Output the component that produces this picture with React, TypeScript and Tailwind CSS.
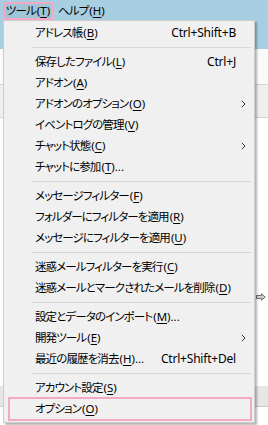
import React from 'react';

type Item =
  | { sep: true }
  | { label: string; key: string; tail?: string; shortcut?: string; sub?: boolean; hot?: boolean };

const items: Item[] = [
  { label: 'アドレス帳', key: 'B', shortcut: 'Ctrl+Shift+B' },
  { sep: true },
  { label: '保存したファイル', key: 'L', shortcut: 'Ctrl+J' },
  { label: 'アドオン', key: 'A' },
  { label: 'アドオンのオプション', key: 'O', sub: true },
  { label: 'イベントログの管理', key: 'V' },
  { label: 'チャット状態', key: 'C', sub: true },
  { label: 'チャットに参加', key: 'T', tail: '...' },
  { sep: true },
  { label: 'メッセージフィルター', key: 'F' },
  { label: 'フォルダーにフィルターを適用', key: 'R' },
  { label: 'メッセージにフィルターを適用', key: 'U' },
  { sep: true },
  { label: '迷惑メールフィルターを実行', key: 'C' },
  { label: '迷惑メールとマークされたメールを削除', key: 'D' },
  { sep: true },
  { label: '設定とデータのインポート', key: 'M', tail: '...' },
  { label: '開発ツール', key: 'E', sub: true },
  { label: '最近の履歴を消去', key: 'H', tail: '...', shortcut: 'Ctrl+Shift+Del' },
  { sep: true },
  { label: 'アカウント設定', key: 'S' },
  { label: 'オプション', key: 'O', hot: true },
];

function Chevron() {
  return (
    <svg width="5" height="8" viewBox="0 0 5 8" fill="none">
      <path d="M0.8 0.8 L4 4 L0.8 7.2" stroke="#333" strokeWidth="1" />
    </svg>
  );
}

function Label({ text, k, tail }: { text: string; k: string; tail?: string }) {
  return (
    <span className="whitespace-nowrap text-[11.5px]">
      <span className="tracking-[-0.9px]">{text}</span>
      <span className="ml-[1px]">(</span>
      <span className="underline underline-offset-2">{k}</span>){tail}
    </span>
  );
}

export default function App() {
  return (
    <div
      className="relative h-[425px] w-[268px] overflow-hidden bg-white text-[12px] text-black [font-feature-settings:'palt']"
      style={{ fontFamily: '"Noto Sans", "Noto Sans CJK JP", sans-serif' }}
    >
      {/* window background */}
      <div className="flex h-full flex-col">
        <div className="h-[49px] bg-[#a7cfe1]">
          <div className="flex h-[21px] items-center">
            <div className="ml-[3px] flex h-[18px] w-[50px] items-center justify-center border-2 border-[#f3a8c6] bg-[#9fc5d8]">
              <Label text="ツール" k="T" />
            </div>
            <div className="ml-[5px]">
              <Label text="ヘルプ" k="H" />
            </div>
          </div>
        </div>
        <div className="h-[36px] border-b border-[#d4d4d4] bg-[#fafafa]" />
        <div className="h-[33px] border-b border-[#d4d4d4] bg-[#efefef]" />
        <div className="flex h-[268px] items-center justify-end pr-[2px] pt-[90px]">
          <svg width="10" height="8" viewBox="0 0 10 8" fill="none">
            <path d="M0.5 2.5 H5.5 V0.8 L9.2 4 L5.5 7.2 V5.5 H0.5 Z" fill="#cfcfcf" stroke="#6b6b6b" strokeWidth="1" />
          </svg>
        </div>
        <div className="h-[21px] border-b border-[#c8c8c8] bg-[#e6e6e6]" />
        <div className="flex-1 bg-white" />
      </div>

      {/* dropdown menu */}
      <div className="absolute left-[3px] top-[20px] w-[252px] border border-[#cccccc] bg-[#f0f0f0] pb-[3px] pt-[1px] shadow-[2px_2px_2px_rgba(0,0,0,0.3)]">
        {items.map((it, i) =>
          'sep' in it ? (
            <div key={i} className="flex h-[8px] items-center pl-[28px] pr-[3px]">
              <div className="h-px flex-1 bg-[#d7d7d7]" />
            </div>
          ) : (
            <div key={i} className="relative flex h-[21px] items-center pl-[31px]">
              {it.hot && (
                <span className="absolute -bottom-[1.5px] -top-[1.5px] left-[4px] right-[2px] border-2 border-[#f3a8c6]" />
              )}
              <Label text={it.label} k={it.key} tail={it.tail} />
              <span className="ml-auto whitespace-nowrap tracking-[-0.2px]">{it.shortcut}</span>
              <span className="flex w-[18px] pl-[5px]">{it.sub && <Chevron />}</span>
            </div>
          )
        )}
      </div>
    </div>
  );
}
